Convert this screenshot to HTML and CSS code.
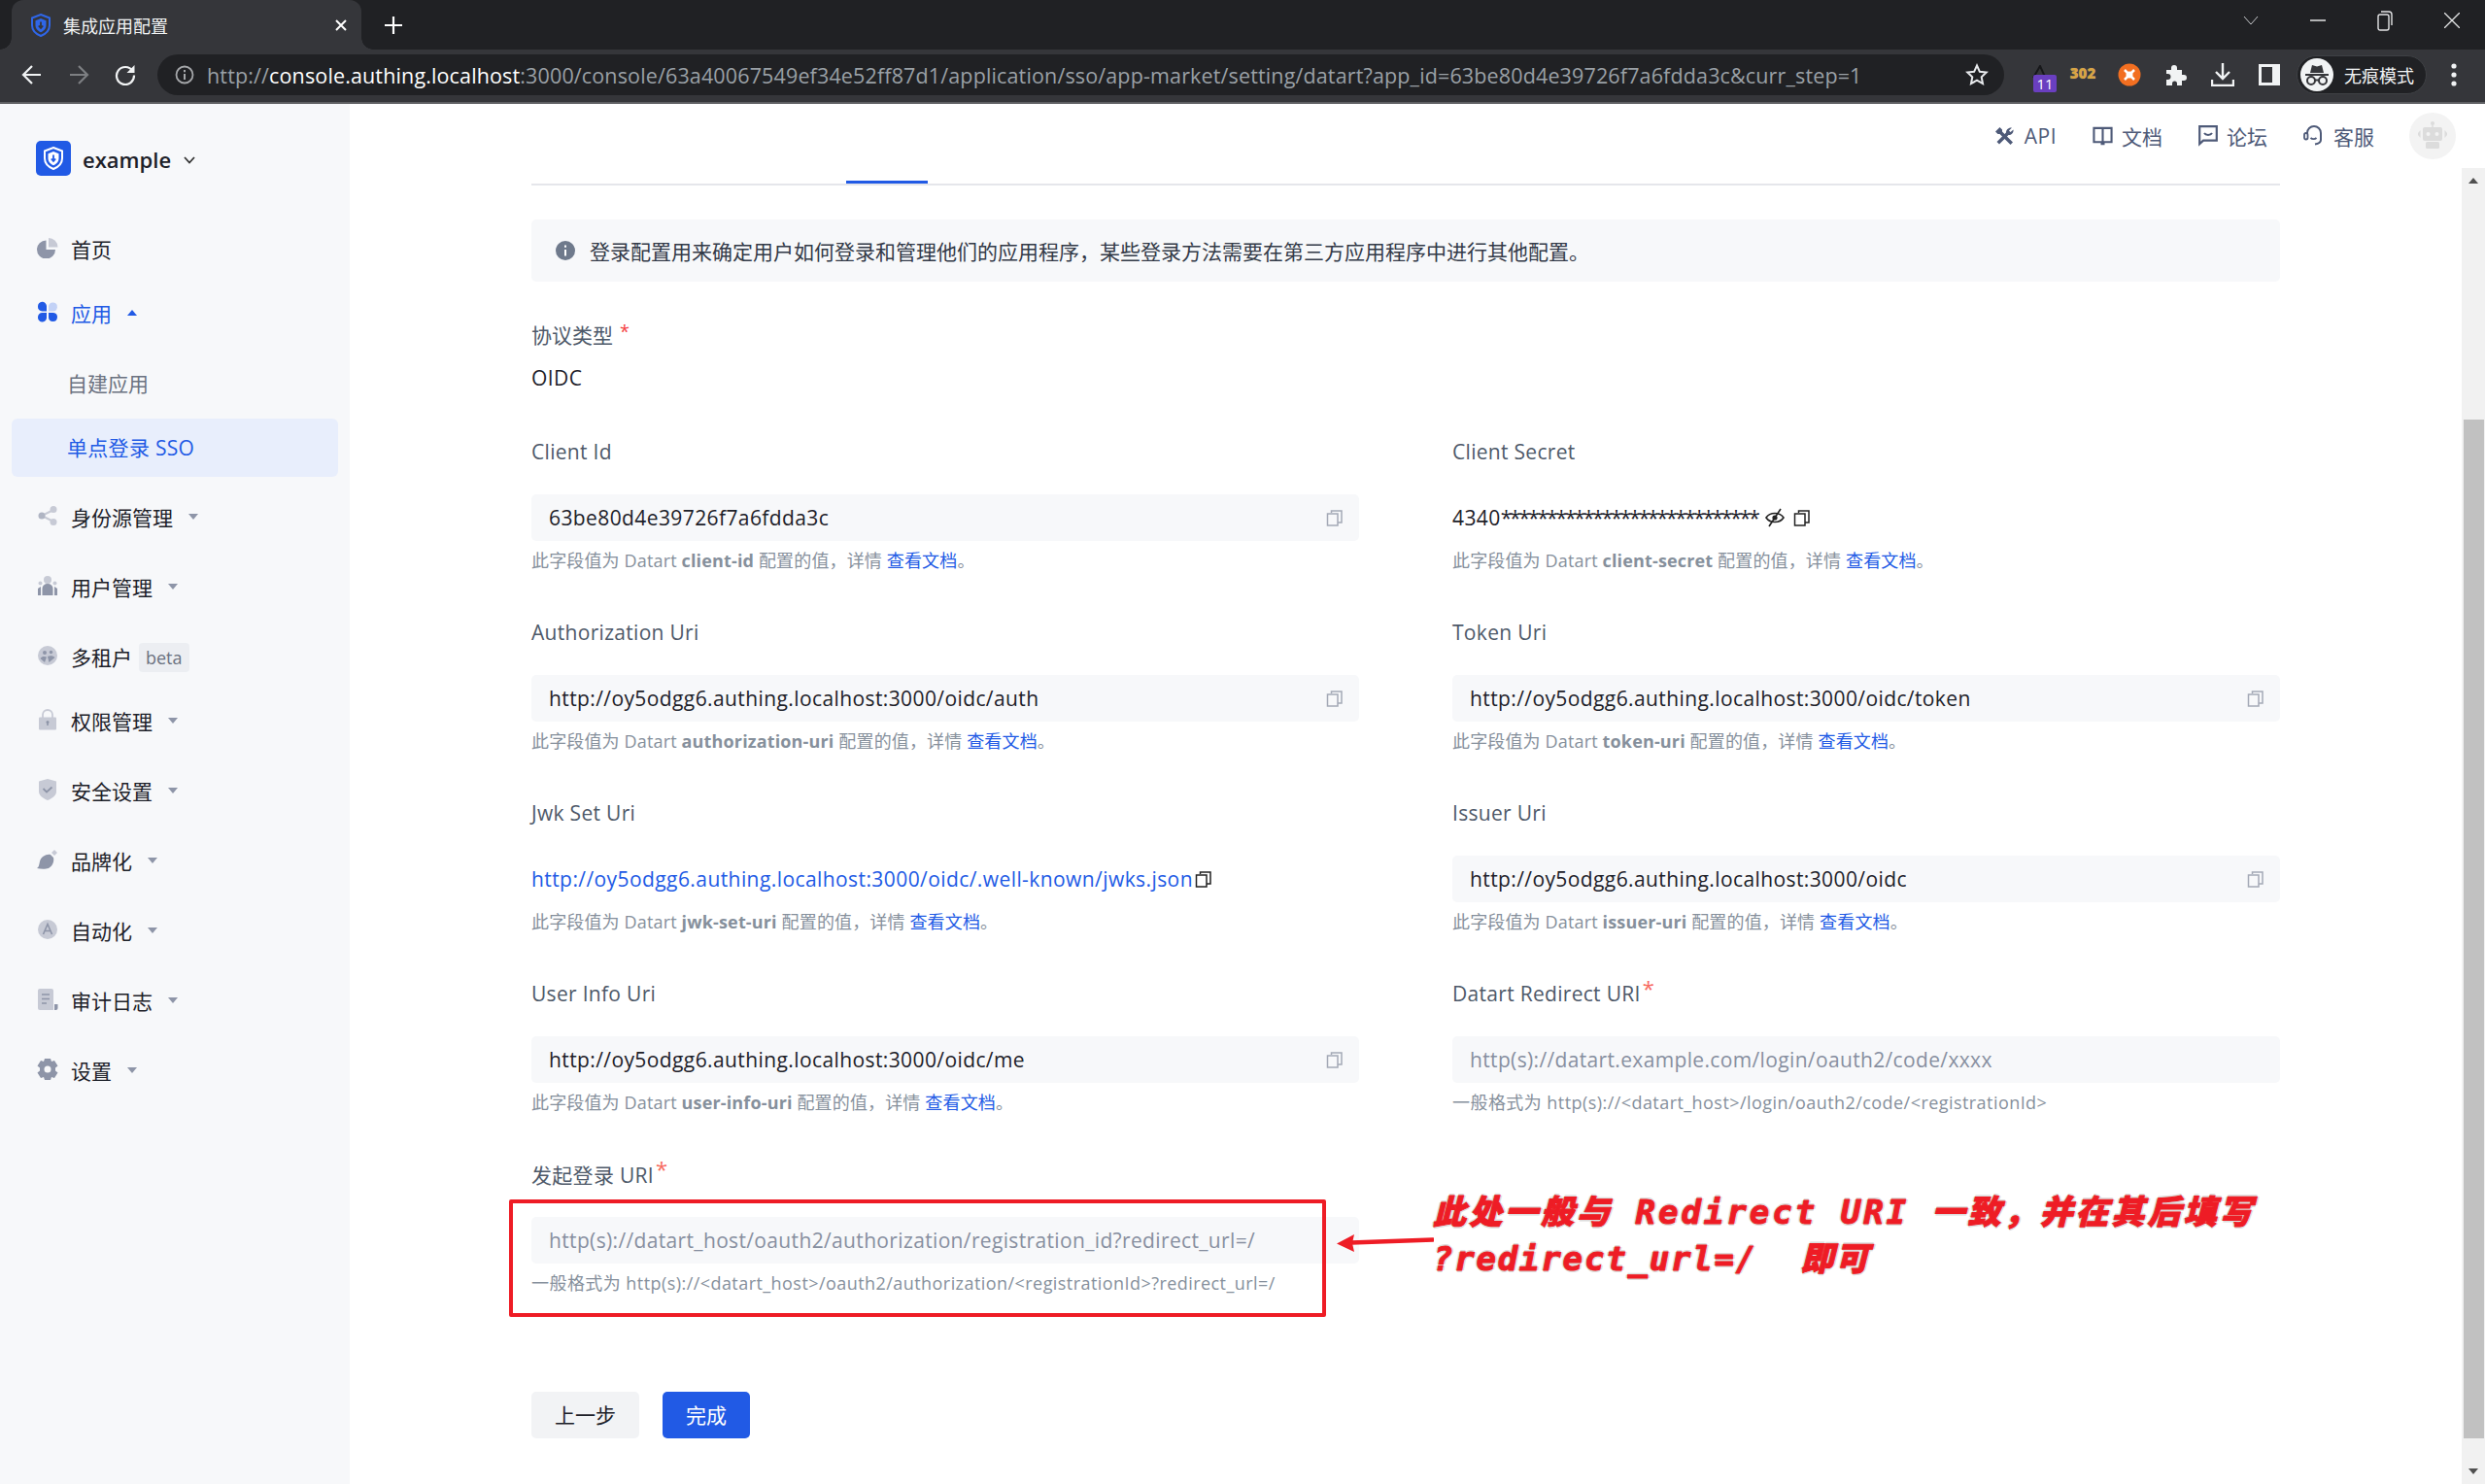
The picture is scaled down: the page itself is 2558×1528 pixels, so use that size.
FILE: index.html
```html
<!DOCTYPE html>
<html lang="zh-CN">
<head>
    <meta charset="utf-8">
    <title>集成应用配置</title>
    <link rel="stylesheet" href="styles.css">
</head>
<body>
    <svg class="defs" width="0" height="0">
        <symbol id="copy" viewBox="0 0 17 17">
            <path d="M5.500 3V1h10.500v12H12" fill="none" stroke="currentColor" stroke-width="1.500"/>
            <rect x="1.500" y="4" width="10.500" height="12" fill="none" stroke="currentColor" stroke-width="1.500"/>
        </symbol>
        <symbol id="shield" viewBox="0 0 20 24">
            <path d="M10 1 19 4.500V12c0 5.500-4 9-9 11C5 21 1 17.500 1 12V4.500Z" fill="none" stroke="currentColor" stroke-width="2"/>
            <path d="M10 5 15.500 7.200V12c0 3.500-2.500 5.800-5.500 7.200C7 17.800 4.500 15.500 4.500 12V7.200Z" fill="currentColor"/>
            <path d="M10 8.500v6M7.800 12.500 10 15l2.200-2.500" fill="none" stroke="var(--ink)" stroke-width="1.800"/>
        </symbol>
        <symbol id="caret-down" viewBox="0 0 10 6">
            <path d="M0 0h10L5 6Z" fill="currentColor"/>
        </symbol>
    </svg>

    <div class="tabbar">
        <div class="tab">
            <svg class="tab-icon"><use href="#shield"/></svg>
            <span class="tab-title">集成应用配置</span>
            <span class="tab-close">
                <svg width="14" height="14" viewBox="0 0 14 14"><path d="M2 2l10 10M12 2 2 12" stroke="#fff" stroke-width="2"/></svg>
            </span>
        </div>
        <div class="newtab">
            <svg width="18" height="18" viewBox="0 0 18 18"><path d="M9 0v18M0 9h18" stroke="#fff" stroke-width="2.200"/></svg>
        </div>
        <div class="winctl">
            <span><svg width="16" height="10" viewBox="0 0 16 10"><path d="M1 1l7 8 7-8" fill="none" stroke="#c4c6c9" stroke-width="1"/></svg></span>
            <span><svg width="16" height="2" viewBox="0 0 16 2"><path d="M0 1h16" stroke="#e3e4e5" stroke-width="1.500"/></svg></span>
            <span><svg width="16" height="22" viewBox="0 0 16 22"><rect x="1" y="5" width="11" height="16" rx="2" fill="none" stroke="#e3e4e5" stroke-width="1.400"/><path d="M4 2h8a3 3 0 0 1 3 3v11" fill="none" stroke="#e3e4e5" stroke-width="1.400"/></svg></span>
            <span><svg width="16" height="16" viewBox="0 0 16 16"><path d="M0 0l16 16M16 0 0 16" stroke="#e3e4e5" stroke-width="1.300"/></svg></span>
        </div>
    </div>

    <div class="toolbar">
        <span class="navbtn"><svg width="22" height="22" viewBox="0 0 22 22"><path d="M20 11H3M11 2l-9 9 9 9" fill="none" stroke="#f1f3f4" stroke-width="2.200"/></svg></span>
        <span class="navbtn"><svg width="22" height="22" viewBox="0 0 22 22"><path d="M2 11h17M11 2l9 9-9 9" fill="none" stroke="#7d7f82" stroke-width="2.200"/></svg></span>
        <span class="navbtn"><svg width="22" height="22" viewBox="0 0 22 22"><path d="M18.500 7A9 9 0 1 0 20 11.500" fill="none" stroke="#f1f3f4" stroke-width="2.200"/><path d="M20.500 1v8h-8Z" fill="#f1f3f4"/></svg></span>
        <div class="omnibox">
            <svg class="omni-info" width="20" height="20" viewBox="0 0 20 20"><circle cx="10" cy="10" r="8.500" fill="none" stroke="#a5a7aa" stroke-width="1.800"/><path d="M10 9v6M10 5v2.200" stroke="#a5a7aa" stroke-width="2"/></svg>
            <div class="url">http://<b>console.authing.localhost</b>:3000/console/63a40067549ef34e52ff87d1/application/sso/app-market/setting/datart?app_id=63be80d4e39726f7a6fdda3c&amp;curr_step=1</div>
            <svg width="24" height="24" viewBox="0 0 24 24"><path d="M12 2.500l2.900 6.300 6.800.8-5 4.700 1.300 6.800-6-3.400-6 3.400 1.300-6.800-5-4.700 6.800-.8Z" fill="none" stroke="#e8eaed" stroke-width="2"/></svg>
        </div>
        <span class="ext ext-first">
            <svg width="26" height="28" viewBox="0 0 26 28"><path d="M1 13 8 1l5 11" fill="none" stroke="#17181a" stroke-width="2"/><rect x="1" y="10" width="24" height="18" rx="2" fill="#6a3fc0"/><text x="13" y="25" class="ext-num">11</text></svg>
        </span>
        <span class="ext ext-302">302</span>
        <span class="ext">
            <svg width="24" height="24" viewBox="0 0 24 24"><circle cx="12" cy="12" r="11.500" fill="#f26f21"/><path d="M7 7l10 10M17 7 7 17" stroke="#fff" stroke-width="2.500"/><circle cx="12" cy="12" r="3.500" fill="#fff"/></svg>
        </span>
        <span class="ext">
            <svg width="22" height="22" viewBox="0 0 22 22"><path d="M1 6h5V4a3 3 0 0 1 6 0v2h5v5h2a3 3 0 0 1 0 6h-2v5h-5v-2a2.500 2.500 0 0 0-5 0v2H1v-6h1.500a3 3 0 0 0 0-6H1Z" fill="#f1f3f4"/></svg>
        </span>
        <span class="ext">
            <svg width="24" height="24" viewBox="0 0 24 24"><path d="M12 0v15M5 9l7 7 7-7M1 17v6h22v-6" fill="none" stroke="#f1f3f4" stroke-width="2.400"/></svg>
        </span>
        <span class="ext">
            <svg width="22" height="22" viewBox="0 0 22 22"><rect width="22" height="22" fill="#f1f3f4"/><rect x="3" y="3" width="11" height="16" fill="#35363a"/></svg>
        </span>
        <div class="incognito">
            <svg width="34" height="34" viewBox="0 0 34 34"><circle cx="17" cy="17" r="17" fill="#f1f3f4"/><path d="M5 16h24v2H5ZM10 15l2-8 5 1.500L22 7l2 8Z" fill="#35363a"/><circle cx="11" cy="23" r="4" fill="none" stroke="#35363a" stroke-width="2"/><circle cx="23" cy="23" r="4" fill="none" stroke="#35363a" stroke-width="2"/><path d="M15 22.500h4" stroke="#35363a" stroke-width="2"/></svg>
            <span>无痕模式</span>
        </div>
        <span class="ext ext-menu">
            <svg width="6" height="24" viewBox="0 0 6 24"><circle cx="3" cy="3" r="2.600" fill="#f1f3f4"/><circle cx="3" cy="12" r="2.600" fill="#f1f3f4"/><circle cx="3" cy="21" r="2.600" fill="#f1f3f4"/></svg>
        </span>
    </div>

    <div class="app">
        <div class="sidebar">
            <div class="brand">
                <span class="brand-logo"><svg width="20" height="24"><use href="#shield"/></svg></span>
                <span class="brand-name">example</span>
                <svg class="brand-arrow" width="12" height="8" viewBox="0 0 12 8"><path d="M1 1l5 5.500L11 1" fill="none" stroke="#333" stroke-width="1.800"/></svg>
            </div>
            <div class="menu">
                <div class="item">
                    <svg class="nav-icon" viewBox="0 0 22 22"><path d="M9.500 3.500V13H19A9.500 9.500 0 1 1 9.500 3.500Z" fill="#8e95a8"/><path d="M12 1a9.500 9.500 0 0 1 9.500 9.500H12Z" fill="#c7cad5"/></svg>
                    <span>首页</span>
                </div>
                <div class="item item-tight item-open">
                    <svg class="nav-icon" viewBox="0 0 22 22"><path d="M1 5.500a4.500 4.500 0 0 1 9-.5v5.500H5.500A4.500 4.500 0 0 1 1 5.500ZM1 16.500A4.500 4.500 0 0 1 5.500 12H10v5.500a4.500 4.500 0 0 1-9-1ZM12 12h5a4.500 4.500 0 1 1-5 4.500Z" fill="#215ae5"/><path d="M12 5a4.500 4.500 0 1 1 4.500 5.500H12Z" fill="#c3d2f6"/></svg>
                    <span>应用</span>
                    <svg class="caret caret-up"><use href="#caret-down"/></svg>
                </div>
                <div class="item sub">自建应用</div>
                <div class="item item-tight sub sub-active">单点登录 SSO</div>
                <div class="item">
                    <svg class="nav-icon" viewBox="0 0 22 22"><path d="M17 5 5 11l12 6" fill="none" stroke="#c7cad5" stroke-width="2"/><circle cx="17" cy="4.500" r="3.500" fill="#c7cad5"/><circle cx="5" cy="11" r="3.500" fill="#b0b5c3"/><circle cx="17" cy="17.500" r="3.500" fill="#c7cad5"/></svg>
                    <span>身份源管理</span>
                    <svg class="caret"><use href="#caret-down"/></svg>
                </div>
                <div class="item">
                    <svg class="nav-icon" viewBox="0 0 22 22"><circle cx="11" cy="5" r="4" fill="#c7cad5"/><circle cx="3.500" cy="8.500" r="2" fill="#c7cad5"/><circle cx="18.500" cy="8.500" r="2" fill="#c7cad5"/><path d="M5.500 21v-7a5.500 5 0 0 1 11 0v7Z" fill="#8e95a8"/><path d="M1 21v-7l3-2v9ZM21 21v-7l-3-2v9Z" fill="#8e95a8"/></svg>
                    <span>用户管理</span>
                    <svg class="caret"><use href="#caret-down"/></svg>
                </div>
                <div class="item">
                    <svg class="nav-icon" viewBox="0 0 22 22"><circle cx="11" cy="11" r="10" fill="#c7cad5"/><circle cx="8" cy="8" r="2" fill="#8e95a8"/><circle cx="14.500" cy="7.500" r="1.700" fill="#8e95a8"/><path d="M3.500 14c1-2.500 5-2.500 6.500-1.500L8 18ZM11 12c2-1.500 6-1 7.500 1l-6 5Z" fill="#8e95a8"/></svg>
                    <span>多租户</span>
                    <span class="beta">beta</span>
                </div>
                <div class="item item-tight">
                    <svg class="nav-icon" viewBox="0 0 22 22"><path d="M6 9V6a5 5 0 0 1 10 0v3" fill="none" stroke="#c7cad5" stroke-width="1.800"/><rect x="2" y="8.500" width="18" height="13" rx="1" fill="#c7cad5"/><path d="M11 13v4" stroke="#8e95a8" stroke-width="1.600"/><circle cx="11" cy="13.500" r="1.500" fill="#8e95a8"/></svg>
                    <span>权限管理</span>
                    <svg class="caret"><use href="#caret-down"/></svg>
                </div>
                <div class="item">
                    <svg class="nav-icon" viewBox="0 0 22 22"><path d="M11 0 20 2.500V13c0 4-4 7-9 9-5-2-9-5-9-9V2.500Z" fill="#c7cad5"/><path d="M6.500 10l3.500 3.500 5.500-5" fill="none" stroke="#8e95a8" stroke-width="1.800"/></svg>
                    <span>安全设置</span>
                    <svg class="caret"><use href="#caret-down"/></svg>
                </div>
                <div class="item">
                    <svg class="nav-icon" viewBox="0 0 22 22"><path d="M15 4l3-3 3 3-3 3Z" fill="#c7cad5"/><path d="M0 20c2-1 2-3 3-7 1-5 7-8 11-7l3 3c1 4-1 9-5 11-3 1-8 1-12 0Z" fill="#8e95a8"/></svg>
                    <span>品牌化</span>
                    <svg class="caret"><use href="#caret-down"/></svg>
                </div>
                <div class="item">
                    <svg class="nav-icon" viewBox="0 0 22 22"><circle cx="11" cy="11" r="10" fill="#c7cad5"/><path d="M6.500 16 11 5.500 15.500 16M8 12.500h6" fill="none" stroke="#8e95a8" stroke-width="1.600"/></svg>
                    <span>自动化</span>
                    <svg class="caret"><use href="#caret-down"/></svg>
                </div>
                <div class="item">
                    <svg class="nav-icon" viewBox="0 0 22 22"><path d="M1 2a2 2 0 0 1 2-2h12a2 2 0 0 1 2 2v20H3a2 2 0 0 1-2-2Z" fill="#c7cad5"/><path d="M18 16h3.500v4a2 2 0 0 1-2 2H18Z" fill="#8e95a8"/><path d="M5 6h8M5 10.500h8M5 15h5" stroke="#8e95a8" stroke-width="1.600"/></svg>
                    <span>审计日志</span>
                    <svg class="caret"><use href="#caret-down"/></svg>
                </div>
                <div class="item">
                    <svg class="nav-icon" viewBox="0 0 22 22"><path d="M8 0h6l1 3 3-1 3.500 5.500-2.500 2v3l2.500 2L18 20l-3-1-1 3H8l-1-3-3 1L.5 14.500l2.500-2v-3l-2.500-2L4 2l3 1Z" fill="#8e95a8"/><circle cx="11" cy="11" r="3.500" fill="#f7f8fa"/></svg>
                    <span>设置</span>
                    <svg class="caret"><use href="#caret-down"/></svg>
                </div>
            </div>
        </div>

        <div class="main">
            <div class="topbar">
                <span class="toplink toplink-first">
                    <svg width="20" height="20" viewBox="0 0 20 20"><path d="M1 5.500 5.500 1 8 3.500v2L19 16.500 16.500 19 5.500 8h-2Z" fill="#4e5a78"/><path d="M12 6.500c0-3 2.500-5.500 6-5l-3 3 1.500 1.500 3-2.500c.5 3-2 6-5 5.500l-9.500 9.500-2.500-2.500L12 6.500Z" fill="#4e5a78"/></svg>
                    <span class="toplink-api">API</span>
                </span>
                <span class="toplink">
                    <svg width="21" height="20" viewBox="0 0 22 20"><path d="M1.500 1.500h19v15h-8.500v2h-2v-2H1.500ZM11 1.500v15" fill="none" stroke="#4e5a78" stroke-width="2.200"/></svg>
                    文档
                </span>
                <span class="toplink">
                    <svg width="20" height="22" viewBox="0 0 20 22"><path d="M1.200 1.200h17.600v14.500H5l-3.800 3.500Z" fill="none" stroke="#4e5a78" stroke-width="2.200"/><path d="M6 8c1.500 2.500 6.500 2.500 8 0" fill="none" stroke="#4e5a78" stroke-width="2"/></svg>
                    论坛
                </span>
                <span class="toplink">
                    <svg width="22" height="22" viewBox="0 0 22 22"><path d="M4 9V8a7 7 0 0 1 14 0v7c0 2.500-3 4-6 4.500" fill="none" stroke="#4e5a78" stroke-width="2"/><rect x="1" y="8" width="3.500" height="6.500" rx="1.700" fill="none" stroke="#4e5a78" stroke-width="1.800"/><path d="M7.500 13c1.500 1.500 4.500 1.500 6 0" fill="none" stroke="#4e5a78" stroke-width="1.800"/></svg>
                    客服
                </span>
                <span class="avatar">
                    <svg width="32" height="30" viewBox="0 0 32 30"><circle cx="16" cy="2" r="2" fill="#dcdcdc"/><path d="M16 3v4" stroke="#dcdcdc" stroke-width="1.500"/><rect x="6" y="6" width="20" height="14" rx="2" fill="#dcdcdc"/><circle cx="11.500" cy="13" r="2" fill="#f3f3f3"/><circle cx="20.500" cy="13" r="2" fill="#f3f3f3"/><rect x="9" y="21" width="14" height="7" rx="1.500" fill="#dcdcdc"/><path d="M3.500 9v8L1 14v-2ZM28.500 9v8l2.500-3v-2Z" fill="#dcdcdc"/></svg>
                </span>
            </div>

            <div class="body-row">
                <div class="content">
                    <div class="tabs"><span class="tab-ink"></span></div>

                    <div class="alert">
                        <svg width="20" height="20" viewBox="0 0 20 20"><circle cx="10" cy="10" r="10" fill="#6f7a8c"/><path d="M10 9v6.500M10 4.500v2.200" stroke="#fff" stroke-width="2"/></svg>
                        <span class="alert-text">登录配置用来确定用户如何登录和管理他们的应用程序，某些登录方法需要在第三方应用程序中进行其他配置。</span>
                    </div>

                    <div class="protocol">
                        <div class="label">协议类型<i class="req-plain">*</i></div>
                        <div class="protocol-value">OIDC</div>
                    </div>

                    <div class="form-grid">
                        <div class="field">
                            <div class="label">Client Id</div>
                            <div class="input"><span class="input-text">63be80d4e39726f7a6fdda3c</span><svg class="copy"><use href="#copy"/></svg></div>
                            <div class="help">此字段值为 Datart <b>client-id</b> 配置的值，详情 <a>查看文档</a>。</div>
                        </div>
                        <div class="field">
                            <div class="label">Client Secret</div>
                            <div class="plain">
                                <span class="input-text">4340</span><span class="stars">****************************</span>
                                <svg class="eye" width="20" height="20" viewBox="0 0 20 20"><path d="M1 10c4-6 14-6 18 0-4 6-14 6-18 0Z" fill="none" stroke="#222" stroke-width="1.600"/><circle cx="10" cy="10" r="2.600" fill="#222"/><path d="M16 1 4 19" stroke="#222" stroke-width="1.600"/></svg>
                                <svg class="copy copy-dark copy-after-eye"><use href="#copy"/></svg>
                            </div>
                            <div class="help">此字段值为 Datart <b>client-secret</b> 配置的值，详情 <a>查看文档</a>。</div>
                        </div>
                        <div class="field">
                            <div class="label">Authorization Uri</div>
                            <div class="input"><span class="input-text">http://oy5odgg6.authing.localhost:3000/oidc/auth</span><svg class="copy"><use href="#copy"/></svg></div>
                            <div class="help">此字段值为 Datart <b>authorization-uri</b> 配置的值，详情 <a>查看文档</a>。</div>
                        </div>
                        <div class="field">
                            <div class="label">Token Uri</div>
                            <div class="input"><span class="input-text">http://oy5odgg6.authing.localhost:3000/oidc/token</span><svg class="copy"><use href="#copy"/></svg></div>
                            <div class="help">此字段值为 Datart <b>token-uri</b> 配置的值，详情 <a>查看文档</a>。</div>
                        </div>
                        <div class="field">
                            <div class="label">Jwk Set Uri</div>
                            <div class="plain">
                                <a class="plain-link">http://oy5odgg6.authing.localhost:3000/oidc/.well-known/jwks.json</a>
                                <svg class="copy copy-dark"><use href="#copy"/></svg>
                            </div>
                            <div class="help">此字段值为 Datart <b>jwk-set-uri</b> 配置的值，详情 <a>查看文档</a>。</div>
                        </div>
                        <div class="field">
                            <div class="label">Issuer Uri</div>
                            <div class="input"><span class="input-text">http://oy5odgg6.authing.localhost:3000/oidc</span><svg class="copy"><use href="#copy"/></svg></div>
                            <div class="help">此字段值为 Datart <b>issuer-uri</b> 配置的值，详情 <a>查看文档</a>。</div>
                        </div>
                        <div class="field">
                            <div class="label">User Info Uri</div>
                            <div class="input"><span class="input-text">http://oy5odgg6.authing.localhost:3000/oidc/me</span><svg class="copy"><use href="#copy"/></svg></div>
                            <div class="help">此字段值为 Datart <b>user-info-uri</b> 配置的值，详情 <a>查看文档</a>。</div>
                        </div>
                        <div class="field">
                            <div class="label">Datart Redirect URI<i class="req">*</i></div>
                            <div class="input"><span class="placeholder">http(s)://datart.example.com/login/oauth2/code/xxxx</span></div>
                            <div class="help help-format">一般格式为 http(s)://&lt;datart_host&gt;/login/oauth2/code/&lt;registrationId&gt;</div>
                        </div>
                        <div class="field">
                            <div class="label">发起登录 URI<i class="req">*</i></div>
                            <div class="input"><span class="placeholder">http(s)://datart_host/oauth2/authorization/registration_id?redirect_url=/</span></div>
                            <div class="help help-format">一般格式为 http(s)://&lt;datart_host&gt;/oauth2/authorization/&lt;registrationId&gt;?redirect_url=/</div>
                        </div>
                    </div>

                    <div class="actions">
                        <button class="btn">上一步</button>
                        <button class="btn btn-primary">完成</button>
                    </div>
                </div>

                <div class="scrollbar">
                    <span class="arrow-up"></span>
                    <span class="thumb"></span>
                    <span class="arrow-down"></span>
                </div>
            </div>
        </div>
    </div>

    <!-- red marks drawn over the screenshot -->
    <div class="mark-box"></div>
    <svg class="mark-arrow" width="100" height="20" viewBox="0 0 100 20"><path d="M99 6.500 15 9.500" stroke="#ee1c25" stroke-width="4.500" stroke-linecap="round"/><path d="M0 10.500 18 1l-2 9 2 9Z" fill="#ee1c25"/></svg>
    <div class="mark-text mark-line1">此处一般与 Redirect URI 一致，并在其后填写</div>
    <div class="mark-text mark-line2">?redirect_url=/  即可</div>
</body>
</html>
```

FILE: styles.css
```css
* {
    box-sizing: border-box;
}
html, body {
    margin: 0;
    height: 100%;
}
body {
    width: 2558px;
    height: 1528px;
    overflow: hidden;
    display: flex;
    flex-direction: column;
    position: relative;
    font-family: "Open Sans", "Noto Sans CJK SC", sans-serif;
    font-size: 21px;
    color: #1d2129;
    background: #fff;
}
.defs {
    position: absolute;
}

/* browser frame */
.tabbar {
    height: 51px;
    flex: none;
    display: flex;
    background: #202124;
}
.tab {
    position: relative;
    width: 360px;
    margin-left: 12px;
    padding: 0 14px 0 20px;
    display: flex;
    align-items: center;
    background: #35363a;
    border-radius: 12px 12px 0 0;
    color: #f1f3f4;
    font-size: 18px;
}
.tab::before,
.tab::after {
    content: "";
    position: absolute;
    bottom: 0;
    width: 12px;
    height: 12px;
}
.tab::before {
    left: -12px;
    background: radial-gradient(circle at 0 0, transparent 11.500px, #35363a 12px);
}
.tab::after {
    right: -12px;
    background: radial-gradient(circle at 100% 0, transparent 11.500px, #35363a 12px);
}
.tab-icon {
    --ink: #35363a;
    width: 20px;
    height: 24px;
    color: #2f66e8;
}
.tab-title {
    margin-left: 13px;
    flex: 1;
}
.tab-close {
    display: flex;
}
.newtab {
    width: 48px;
    margin-left: 9px;
    display: flex;
    align-items: center;
    justify-content: center;
}
.winctl {
    margin-left: auto;
    display: flex;
}
.winctl span {
    width: 69px;
    height: 42px;
    display: flex;
    align-items: center;
    justify-content: center;
}
.toolbar {
    height: 56px;
    flex: none;
    display: flex;
    align-items: center;
    padding: 0 0 2px 9px;
    background: #35363a;
    border-bottom: 2px solid #5f6063;
}
.navbtn {
    width: 48px;
    display: flex;
    justify-content: center;
}
.omnibox {
    width: 1901px;
    height: 42px;
    margin-left: 9px;
    padding: 0 16px 0 18px;
    display: flex;
    align-items: center;
    background: #202124;
    border-radius: 21px;
}
.omni-info {
    flex: none;
}
.url {
    margin-left: 13px;
    flex: 1;
    color: #9aa0a6;
    font-size: 21.500px;
    letter-spacing: 0.14px;
    white-space: nowrap;
    overflow: hidden;
}
.url b {
    color: #fff;
    font-weight: 400;
}
.ext {
    width: 48px;
    flex: none;
    display: flex;
    align-items: center;
    justify-content: center;
}
.ext-first {
    margin-left: 18px;
    padding-top: 8px;
}
.ext-num {
    fill: #fff;
    font-size: 15px;
    text-anchor: middle;
}
.ext-302 {
    margin-left: -9px;
    margin-top: -4px;
    color: #d9a441;
    font-size: 15px;
    font-weight: 800;
    text-shadow: 0 0 1px #8d8d8d;
}
.incognito {
    width: 134px;
    height: 40px;
    margin-left: 4px;
    padding-left: 3px;
    flex: none;
    display: flex;
    align-items: center;
    gap: 11px;
    background: #202124;
    border: 1px solid #3f4145;
    border-radius: 20px;
    color: #f1f3f4;
    font-size: 18px;
}
.ext-menu {
    margin-left: 4px;
}

/* app shell */
.app {
    flex: 1;
    display: flex;
    min-height: 0;
}
.sidebar {
    width: 360px;
    flex: none;
    padding-top: 38px;
    background: #f7f8fa;
}
.brand {
    height: 36px;
    padding-left: 37px;
    display: flex;
    align-items: center;
}
.brand-logo {
    --ink: #215ae5;
    width: 36px;
    height: 36px;
    display: flex;
    align-items: center;
    justify-content: center;
    background: #215ae5;
    border-radius: 5px;
    color: #fff;
}
.brand-name {
    margin: 2px 13px 0 12px;
    font-size: 22px;
    font-weight: 600;
    color: #1d2129;
}
.brand-arrow {
    margin-top: 3px;
}
.menu {
    margin-top: 46px;
    display: flex;
    flex-direction: column;
}
.item {
    height: 60px;
    margin: 12px 12px 0;
    padding: 0 0 2px 26px;
    display: flex;
    align-items: center;
    border-radius: 6px;
    color: #1d2129;
}
.item:first-child {
    margin-top: 0;
}
.item-tight {
    margin-top: 6px;
}
.nav-icon {
    width: 22px;
    height: 22px;
    margin-right: 13px;
    margin-top: -2px;
    flex: none;
}
.item-open {
    color: #215ae5;
}
.caret {
    width: 10px;
    height: 6px;
    margin-left: 16px;
    color: #8e95a8;
}
.caret-up {
    color: #215ae5;
    transform: rotate(180deg);
}
.sub {
    padding-left: 57px;
    color: #6b7280;
}
.sub-active {
    background: #e8eefc;
    color: #215ae5;
    letter-spacing: 0.3px;
}
.beta {
    height: 30px;
    margin: 2px 0 0 7px;
    padding: 0 7px;
    display: flex;
    align-items: center;
    background: #eceef2;
    border-radius: 4px;
    color: #6b7280;
    font-size: 18px;
}

/* main */
.main {
    flex: 1;
    min-width: 0;
    display: flex;
    flex-direction: column;
}
.topbar {
    height: 66px;
    flex: none;
    padding-right: 30px;
    display: flex;
    align-items: center;
    justify-content: flex-end;
}
.toplink {
    margin-right: 37px;
    display: flex;
    align-items: center;
    gap: 9px;
    color: #4e5a78;
}
.toplink-first {
    gap: 11px;
}
.toplink-api {
    letter-spacing: 0.5px;
}
.avatar {
    width: 48px;
    height: 48px;
    margin-left: -1px;
    display: flex;
    align-items: center;
    justify-content: center;
    background: #f3f3f3;
    border-radius: 50%;
}
.body-row {
    flex: 1;
    min-height: 0;
    display: flex;
}
.content {
    flex: 1;
    min-width: 0;
    padding: 0 187px;
}
.tabs {
    height: 18px;
    display: flex;
    align-items: flex-end;
    border-bottom: 2px solid #e5e6eb;
}
.tab-ink {
    width: 84px;
    height: 3px;
    margin-left: 324px;
    background: #215ae5;
}
.alert {
    height: 64px;
    margin-top: 35px;
    padding-left: 25px;
    display: flex;
    align-items: center;
    gap: 15px;
    background: #f7f8fa;
    border-radius: 5px;
    color: #333a48;
}
.alert-text {
    margin-top: -1px;
}
.protocol {
    margin-top: 37px;
}
.label {
    height: 36px;
    padding-bottom: 2px;
    display: flex;
    align-items: center;
    color: #4e5969;
    letter-spacing: 0.3px;
}
.protocol .label {
    letter-spacing: 0;
}
.protocol-value {
    margin-top: 8px;
    line-height: 36px;
    letter-spacing: 0.4px;
}
.req-plain {
    margin: -6px 0 0 7px;
    color: #f53f3f;
    font-style: normal;
    font-size: 18px;
}
.req {
    margin: -12px 0 0 2px;
    color: #f76b5f;
    font-style: normal;
    font-size: 22px;
}
.form-grid {
    margin-top: 41px;
    display: grid;
    grid-template-columns: 852px 852px;
    column-gap: 96px;
    row-gap: 44px;
}
.input {
    height: 48px;
    margin-top: 25px;
    padding: 0 17px 0 18px;
    display: flex;
    align-items: center;
    justify-content: space-between;
    background: #f7f8fa;
    border-radius: 5px;
}
.input-text {
    letter-spacing: 0.4px;
}
.placeholder {
    color: #878fa0;
    letter-spacing: 0.35px;
}
.copy {
    width: 17px;
    height: 17px;
    flex: none;
    color: #a4a9b6;
}
.copy-dark {
    margin-left: 2px;
    color: #222;
}
.plain {
    height: 48px;
    margin-top: 25px;
    display: flex;
    align-items: center;
}
.stars {
    letter-spacing: -2.100px;
}
.eye {
    margin-left: 7px;
}
.copy-after-eye {
    margin-left: 9px;
}
.plain-link {
    color: #215ae5;
    letter-spacing: 0.42px;
}
.help {
    height: 27px;
    margin-top: 6px;
    padding-top: 1px;
    line-height: 27px;
    color: #86909c;
    font-size: 18px;
    letter-spacing: 0.15px;
}
.help-format {
    letter-spacing: 0.44px;
}
.help b {
    font-weight: 700;
}
.help a {
    color: #215ae5;
}
.actions {
    margin-top: 99px;
    display: flex;
    gap: 24px;
}
.btn {
    height: 48px;
    width: 111px;
    padding: 0 0 2px;
    border: 0;
    border-radius: 5px;
    background: #f2f3f5;
    color: #1d2129;
    font: inherit;
}
.btn-primary {
    width: 90px;
    background: #215ae5;
    color: #fff;
}
.scrollbar {
    width: 24px;
    flex: none;
    display: flex;
    flex-direction: column;
    align-items: center;
    background: #f1f1f1;
}
.arrow-up {
    width: 0;
    height: 0;
    margin-top: 10px;
    border: 5.500px solid transparent;
    border-top: 0;
    border-bottom: 6px solid #505050;
}
.thumb {
    width: 21px;
    height: 1049px;
    margin-top: 243px;
    background: #c1c1c1;
}
.arrow-down {
    width: 0;
    height: 0;
    margin-top: 31px;
    border: 5.500px solid transparent;
    border-bottom: 0;
    border-top: 6px solid #505050;
}

/* annotations on top of the page */
.mark-box {
    position: absolute;
    left: 524px;
    top: 1235px;
    width: 841px;
    height: 121px;
    border: 4px solid #ee1c25;
    border-radius: 2px;
}
.mark-arrow {
    position: absolute;
    left: 1376px;
    top: 1270px;
}
.mark-text {
    position: absolute;
    left: 1475px;
    font-family: "DejaVu Sans Mono", "Noto Sans CJK SC", sans-serif;
    font-size: 34px;
    font-weight: 900;
    font-style: italic;
    letter-spacing: 3px;
    white-space: pre;
    color: #ee1c25;
    -webkit-text-stroke: 1px #ee1c25;
    text-shadow: 2px 0 #ddd, -2px 0 #ddd, 0 2px #ddd, 0 -2px #ddd;
}
.mark-line1 {
    top: 1221px;
}
.mark-line2 {
    top: 1269px;
    letter-spacing: 1.800px;
}
```
